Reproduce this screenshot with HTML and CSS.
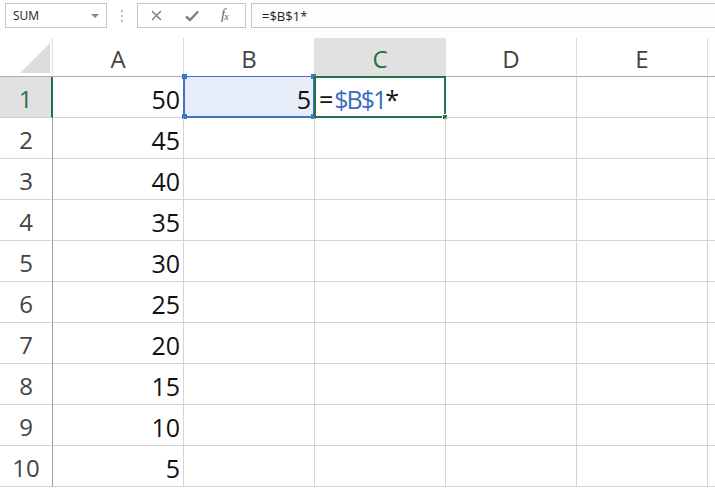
FILE: index.html
```html
<!DOCTYPE html>
<html>
<head>
<meta charset="utf-8">
<link rel="stylesheet" href="styles.css">
</head>
<body>
<div class="toolbar">
  <div class="namebox"><span>SUM</span><span class="caret"></span></div>
  <div class="grip"><i></i><i></i><i></i></div>
  <div class="buttons">
    <svg class="ico" width="11" height="11" viewBox="0 0 11 11"><path d="M1 1 L10 10 M10 1 L1 10" stroke="#808080" stroke-width="1.5" fill="none"/></svg>
    <svg class="ico" width="14" height="12" viewBox="0 0 14 12"><path d="M1 6.5 L5 10 L13 1.5" stroke="#808080" stroke-width="2.4" fill="none"/></svg>
    <span class="fx">f<sub>x</sub></span>
  </div>
  <div class="formula">=$B$1*</div>
</div>
<div class="sheet">
  <div class="corner"><span class="tri"></span></div>
  <div class="ch">A</div>
  <div class="ch">B</div>
  <div class="ch sel">C</div>
  <div class="ch">D</div>
  <div class="ch">E</div>
  <div class="ch last"></div>

  <div class="rh sel">1</div>
  <div class="c num">50</div>
  <div class="c num ref">5<span class="refbox"><b class="h tl"></b><b class="h tr"></b><b class="h bl"></b><b class="h br"></b></span></div>
  <div class="c edit">=<span class="blue">$B$1</span><span class="star">*</span><span class="active"><b class="fill"></b></span></div>
  <div class="c"></div><div class="c"></div><div class="c last"></div>

  <div class="rh">2</div><div class="c num">45</div><div class="c"></div><div class="c"></div><div class="c"></div><div class="c"></div><div class="c last"></div>
  <div class="rh">3</div><div class="c num">40</div><div class="c"></div><div class="c"></div><div class="c"></div><div class="c"></div><div class="c last"></div>
  <div class="rh">4</div><div class="c num">35</div><div class="c"></div><div class="c"></div><div class="c"></div><div class="c"></div><div class="c last"></div>
  <div class="rh">5</div><div class="c num">30</div><div class="c"></div><div class="c"></div><div class="c"></div><div class="c"></div><div class="c last"></div>
  <div class="rh">6</div><div class="c num">25</div><div class="c"></div><div class="c"></div><div class="c"></div><div class="c"></div><div class="c last"></div>
  <div class="rh">7</div><div class="c num">20</div><div class="c"></div><div class="c"></div><div class="c"></div><div class="c"></div><div class="c last"></div>
  <div class="rh">8</div><div class="c num">15</div><div class="c"></div><div class="c"></div><div class="c"></div><div class="c"></div><div class="c last"></div>
  <div class="rh">9</div><div class="c num">10</div><div class="c"></div><div class="c"></div><div class="c"></div><div class="c"></div><div class="c last"></div>
  <div class="rh">10</div><div class="c num">5</div><div class="c"></div><div class="c"></div><div class="c"></div><div class="c"></div><div class="c last"></div>
</div>
</body>
</html>
```
FILE: styles.css
```css
* { box-sizing: border-box; }
html, body { margin: 0; padding: 0; background: #fff; overflow: hidden; }
body { width: 715px; height: 492px; font-family: "Open Sans", "Noto Sans", sans-serif; }

.toolbar {
  height: 38px;
  display: flex;
  align-items: flex-start;
  padding: 3px 0 0 5px;
}
.namebox {
  width: 102px; height: 25px;
  border: 1px solid #c6c6c6;
  background: #fff;
  display: flex; align-items: center; justify-content: space-between;
  padding: 0 7px 0 7px;
  font-size: 12px; color: #222;
}
.caret {
  width: 0; height: 0;
  border-left: 4px solid transparent;
  border-right: 4px solid transparent;
  border-top: 4px solid #888;
  margin-top: 1px;
}
.grip {
  width: 30px; height: 25px;
  display: flex; flex-direction: column; align-items: center; justify-content: center; gap: 3px;
}
.grip i { display: block; width: 2px; height: 2px; background: #b8b8b8; }
.buttons {
  width: 109px; height: 25px;
  border: 1px solid #c6c6c6;
  display: flex; align-items: center;
  padding: 0 0 0 13px;
  gap: 23px;
}
.fx {
  font-family: "Liberation Serif", serif; font-style: italic;
  font-size: 15px; color: #666; line-height: 1; margin-left: -1px; margin-top: -2px;
}
.fx sub { font-size: 10px; vertical-align: -1px; margin-left: -1px; }
.formula {
  margin-left: 5px;
  flex: 1; height: 25px;
  border: 1px solid #c6c6c6; border-right: none;
  background: #fdfdfd;
  font-size: 13px; color: #222;
  display: flex; align-items: center; padding-left: 10px;
}

.sheet {
  display: grid;
  grid-template-columns: 53px 131px 131px 131px 131px 131px 1fr;
  grid-template-rows: 39px repeat(10, 41px);
}
.corner {
  border-bottom: 1px solid #ababab;
  border-right: 1px solid #dedede;
  position: relative;
}
.tri {
  position: absolute; left: 20px; top: 5px;
  width: 0; height: 0;
  border-left: 30px solid transparent;
  border-bottom: 30px solid #dcdcdc;
}
.ch {
  border-bottom: 1px solid #ababab;
  border-right: 1px solid #dedede;
  display: flex; align-items: center; justify-content: center;
  font-size: 24px; color: #444; padding-top: 2px;
}
.ch.sel { background: #e1e1e1; color: #217346; }
.ch.last, .c.last { border-right: none; }
.rh {
  border-right: 1px solid #9f9f9f;
  border-bottom: 1px solid #d4d4d4;
  display: flex; align-items: center; justify-content: center;
  font-size: 24px; color: #444; padding-top: 3px;
}
.rh.sel { background: #e1e1e1; color: #217346; border-right: 2px solid #217346; }
.c {
  border-right: 1px solid #d4d4d4;
  border-bottom: 1px solid #d4d4d4;
  font-size: 25px; color: #111;
  display: flex; align-items: center;
  padding-top: 3px;
  position: relative;
  white-space: nowrap;
}
.c.num { justify-content: flex-end; padding-right: 3px; }
.c.ref { background: #e8eef9; }
.c.edit { padding-left: 4px; }
.blue { color: #3b6cc1; letter-spacing: -2px; margin-left: 1px; }
.star { margin-left: 0; }
.refbox {
  position: absolute; left: -1px; top: -1px; right: -1px; bottom: -1px;
  border: 2px solid #4472c4; border-top-width: 1px;
}
.h { position: absolute; width: 5px; height: 5px; background: #4472c4; }
.h.tl { left: -3px; top: -3px; }
.h.tr { right: -3px; top: -3px; }
.h.bl { left: -3px; bottom: -3px; }
.h.br { right: -3px; bottom: -3px; }
.active {
  position: absolute; left: -1px; top: -1px; right: -1px; bottom: -1px;
  border: 2px solid #217346;
}
.fill {
  position: absolute; right: -4px; bottom: -4px;
  width: 6px; height: 6px; background: #217346; border: 1px solid #fff;
}
```
